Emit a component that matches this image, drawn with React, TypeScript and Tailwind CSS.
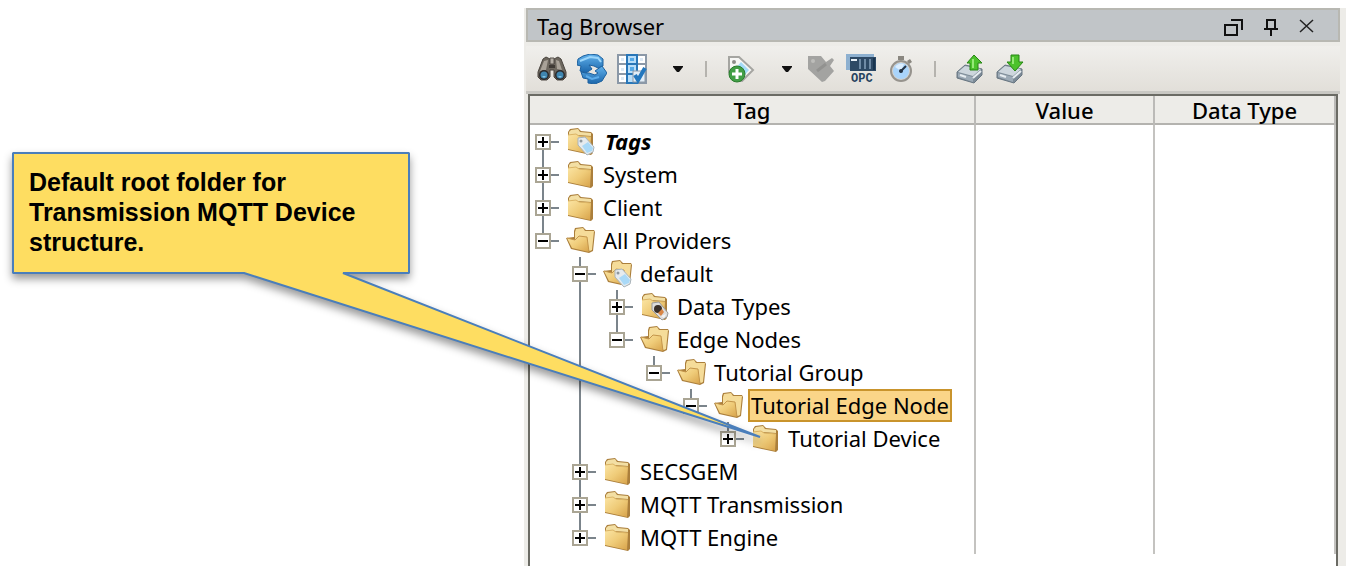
import { type ReactNode } from "react";
import clsx from "clsx";

type FolderKind = "closed" | "open";
type Badge = "tag" | "type";

type TreeNode = {
  label: string;
  level: number;
  open?: boolean;
  first?: boolean;
  last?: boolean;
  badge?: Badge;
  selected?: boolean;
  // levels above this node whose branch continues below it
  guides?: number[];
};

const nodes: TreeNode[] = [
  { label: "Tags", level: 0, first: true, badge: "tag" },
  { label: "System", level: 0 },
  { label: "Client", level: 0 },
  { label: "All Providers", level: 0, open: true, last: true },
  { label: "default", level: 1, open: true, badge: "tag" },
  { label: "Data Types", level: 2, badge: "type", guides: [1] },
  { label: "Edge Nodes", level: 2, open: true, last: true, guides: [1] },
  { label: "Tutorial Group", level: 3, open: true, last: true, guides: [1] },
  {
    label: "Tutorial Edge Node",
    level: 4,
    open: true,
    last: true,
    selected: true,
    guides: [1],
  },
  { label: "Tutorial Device", level: 5, last: true, guides: [1] },
  { label: "SECSGEM", level: 1 },
  { label: "MQTT Transmission", level: 1 },
  { label: "MQTT Engine", level: 1, last: true },
];

export default function App() {
  return (
    <div className="flex bg-white pt-2 pr-1 pb-2 font-['Noto_Sans','Open_Sans',sans-serif] text-[22px] text-black">
      <Callout />
      <TagBrowser />
    </div>
  );
}

const Callout = () => (
  <aside className="relative z-10 w-[524px] shrink-0 pt-[144px] pl-3">
    <svg
      className="pointer-events-none absolute top-0 left-0 overflow-visible"
      width="780"
      height="450"
      viewBox="0 0 780 450"
      aria-hidden="true"
    >
      <path
        d="M13 145H409V265H343L760 429L244 265H13Z"
        fill="#fedd61"
        stroke="#4a7ebb"
        strokeWidth="2"
        strokeLinejoin="bevel"
        className="drop-shadow-[0_5px_4px_rgba(0,0,0,0.4)]"
      />
    </svg>
    <p className="relative w-[398px] px-[17px] py-[15px] font-['Liberation_Sans',Arial,sans-serif] text-[25px] leading-[30px] font-bold">
      Default root folder for Transmission MQTT Device structure.
    </p>
  </aside>
);

const TagBrowser = () => (
  <main className="min-w-0 flex-1 bg-[#edece8] pr-[6px] pl-[2px]">
    <TitleBar />
    <Toolbar />
    <div className="mx-[2px] border-2 border-b-0 border-[#6b6b64] bg-white pb-3">
      <table className="w-full table-fixed border-collapse">
        <thead>
          <tr className="h-7 border-b-2 border-[#b4b3af] bg-[#edece8] leading-[26px]">
            <HeaderCell>Tag</HeaderCell>
            <HeaderCell className="w-[179px]">Value</HeaderCell>
            <HeaderCell className="w-[181px]">Data Type</HeaderCell>
          </tr>
        </thead>
        <tbody>
          {nodes.map((node) => (
            <tr key={node.label}>
              <td className="border-r-2 border-[#c4c3c0] p-0">
                <TreeRow node={node} />
              </td>
              <td className="border-r-2 border-[#c4c3c0] p-0" />
              <td className="border-r-2 border-[#c4c3c0] p-0" />
            </tr>
          ))}
        </tbody>
      </table>
    </div>
  </main>
);

const HeaderCell = ({
  children,
  className,
}: {
  children: ReactNode;
  className?: string;
}) => (
  <th
    scope="col"
    className={clsx("border-r-2 border-[#bbbab7] p-0 font-medium", className)}
  >
    {children}
  </th>
);

const TitleBar = () => (
  <header className="flex h-[34px] items-center border-2 border-[#b8b8b2] bg-[#c1c5c8] pt-[3px] pr-[22px] pl-[9px]">
    <h1 className="flex-1">Tag Browser</h1>
    <div className="flex items-center gap-4">
      <button type="button" aria-label="Float" className="p-[2px]">
        <svg width="20" height="18" fill="none" stroke="#111" strokeWidth="2">
          <path d="M7 2H18V12" />
          <rect x="1" y="7" width="12" height="10" />
        </svg>
      </button>
      <button type="button" aria-label="Pin" className="p-[2px]">
        <svg width="14" height="18" fill="none" stroke="#111" strokeWidth="2">
          <path d="M3 11V2H11V11M0 11H14M7 11V18" />
        </svg>
      </button>
      <button type="button" aria-label="Close" className="p-[2px]">
        <svg width="16" height="18" fill="none" stroke="#222" strokeWidth="1.5">
          <path d="M2 2L15 14M15 2L2 14" />
        </svg>
      </button>
    </div>
  </header>
);

const Toolbar = () => (
  <div className="mt-1 flex h-12 items-center border-b-3 border-[#c9c8c3] bg-linear-to-b from-[#f0efec] to-[#e2dfd9] pl-[6px]">
    <ToolButton label="Find">
      <BinocularsIcon />
    </ToolButton>
    <ToolButton label="Refresh">
      <RefreshIcon />
    </ToolButton>
    <ToolButton label="Select columns">
      <ColumnsIcon />
    </ToolButton>
    <Caret label="Column options" />
    <Separator />
    <ToolButton label="New tag">
      <AddTagIcon />
    </ToolButton>
    <Caret label="New tag options" />
    <ToolButton label="Edit tag">
      <EditTagIcon />
    </ToolButton>
    <ToolButton label="Browse OPC servers">
      <OpcIcon />
    </ToolButton>
    <ToolButton label="Scan classes">
      <StopwatchIcon />
    </ToolButton>
    <Separator />
    <ToolButton label="Export tags">
      <DriveIcon direction="up" />
    </ToolButton>
    <ToolButton label="Import tags">
      <DriveIcon direction="down" />
    </ToolButton>
  </div>
);

const ToolButton = ({
  label,
  children,
}: {
  label: string;
  children: ReactNode;
}) => (
  <button
    type="button"
    aria-label={label}
    className="flex h-10 w-10 shrink-0 items-center justify-center"
  >
    {children}
  </button>
);

const Caret = ({ label }: { label: string }) => (
  <button
    type="button"
    aria-label={label}
    className="flex h-10 w-10 shrink-0 items-center justify-center pl-3"
  >
    <svg width="10" height="6" viewBox="0 0 10 6">
      <path d="M0 0H10V1L6 6H4L0 1Z" fill="#111" />
    </svg>
  </button>
);

const Separator = () => (
  <div className="mr-[14px] ml-[13px] h-4 w-[2px] shrink-0 bg-[#b5b3ae]" />
);

const TreeRow = ({ node }: { node: TreeNode }) => (
  <div className="flex h-[33px] items-center pl-[5px] whitespace-nowrap">
    {Array.from({ length: node.level }, (_, level) => (
      <div key={level} className="h-full w-[37px] shrink-0 pl-[7px]">
        {node.guides?.includes(level) && (
          <div className="h-full w-[2px] bg-[#7b848b]" />
        )}
      </div>
    ))}
    <div className="flex h-full w-4 shrink-0 flex-col items-center">
      <div
        className={clsx("w-[2px] flex-1", !node.first && "bg-[#7b848b]")}
      />
      <button
        type="button"
        aria-label={`${node.open ? "Collapse" : "Expand"} ${node.label}`}
        className="h-4 w-4 border-2 border-[#aaa594] bg-white"
      >
        <svg width="12" height="12" stroke="#000" strokeWidth="2">
          <path d={node.open ? "M1 6H11" : "M1 6H11M6 1V11"} />
        </svg>
      </button>
      <div className={clsx("w-[2px] flex-1", !node.last && "bg-[#7b848b]")} />
    </div>
    <div className="h-[2px] w-2 shrink-0 bg-[#7b848b]" />
    <FolderIcon kind={node.open ? "open" : "closed"} badge={node.badge} />
    <span
      className={clsx(
        "ml-1 border-2 px-px leading-[29px]",
        node.selected
          ? "border-[#c9942c] bg-[#fad588]"
          : "border-transparent",
        node.first && "pl-[3px] font-bold italic",
      )}
    >
      {node.label}
    </span>
  </div>
);

const FolderIcon = ({ kind, badge }: { kind: FolderKind; badge?: Badge }) => (
  <svg
    className="ml-[7px] shrink-0"
    width="30"
    height="28"
    viewBox="0 0 30 28"
    aria-hidden="true"
  >
    <defs>
      <linearGradient id="folder" x1="0" y1="0" x2="1" y2="1">
        <stop offset="0" stopColor="#fbe5a4" />
        <stop offset="0.500" stopColor="#efcb78" />
        <stop offset="1" stopColor="#d7a24a" />
      </linearGradient>
    </defs>
    {kind === "closed" ? (
      <>
        <path
          d="M2 4L4 1L12 0L15 3L25 4L27 6V25L25 27L2 22Z"
          fill="#ab7f3c"
        />
        <path d="M3 4L5 2L12 1L14 4L25 5V8L12 7L3 7Z" fill="#f3dfa4" />
        <path d="M2 7L10 6L13 8L25 9L24 26L2 21Z" fill="url(#folder)" />
        <path d="M2 7L10 6L13 8L25 9" fill="none" stroke="#dbb465" />
      </>
    ) : (
      <>
        <path
          d="M8 4L9 1L17 0L20 3L28 3L29 5L27 24L23 26L5 22L0 11L8 10Z"
          fill="#ab7f3c"
        />
        <path d="M9 5L10 2L17 1L19 4L28 4L26 23L24 24L9 18Z" fill="#f5dc99" />
        <path d="M1 11L9 13L13 9L21 10L23 25L6 21Z" fill="url(#folder)" />
        <path
          d="M1 11L9 13L13 9L21 10L23 25"
          fill="none"
          stroke="#c4954a"
        />
      </>
    )}
    {badge === "tag" && (
      <>
        <path
          d="M12 10L19 9L28 19L27 24L21 27L12 17Z"
          fill="#e6ebee"
          stroke="#a9b4bb"
        />
        <path d="M16 18L22 14L27 20L26 23L21 25Z" fill="#a9d9f7" />
        <circle cx="15" cy="13" r="1.500" fill="#8e989e" />
      </>
    )}
    {badge === "type" && (
      <>
        <path
          d="M12 10L19 9L28 20L27 24L22 27L12 17Z"
          fill="#dddddd"
          stroke="#999999"
        />
        <circle cx="18" cy="16" r="4" fill="#3a3029" />
        <path d="M18 20L22 16L24 19L21 23Z" fill="#d98545" />
        <path d="M21 23L26 21L24 25Z" fill="#f5f5f5" />
      </>
    )}
  </svg>
);

const BinocularsIcon = () => (
  <svg width="30" height="26" viewBox="0 0 30 26">
    <path
      d="M6 3L9 1L13 3V8H17V3L21 1L24 3L29 16V21L26 24H20L17 21V14H13V21L10 24H4L1 21V16Z"
      fill="#6d675e"
      stroke="#4a453f"
    />
    <path d="M7 5L11 4L9 14L3 15ZM19 4L22 5L25 14L20 13Z" fill="#a9a298" />
    <path d="M13 2H17V8H13Z" fill="#b5afa6" stroke="#57514a" />
    <path d="M12 9H18V12H12Z" fill="#3f3a35" />
    <circle cx="7" cy="19" r="5" fill="#2a2b2d" />
    <circle cx="23" cy="19" r="5" fill="#2a2b2d" />
    <circle cx="7" cy="19" r="3.500" fill="#3f86b0" />
    <circle cx="23" cy="19" r="3.500" fill="#3f86b0" />
    <path d="M5 20H9L7 22ZM21 20H25L23 22Z" fill="#83c2df" />
  </svg>
);

const RefreshIcon = () => (
  <svg width="30" height="30" viewBox="0 0 30 30">
    <defs>
      <linearGradient id="refresh" x1="0" y1="0" x2="0" y2="1">
        <stop offset="0" stopColor="#62b2ec" />
        <stop offset="1" stopColor="#1a65aa" />
      </linearGradient>
    </defs>
    <path
      d="M1 5L6 2L13 0L21 1L26 5L26 12L21 14L17 12L12 11L15 15L9 19L3 17L4 12L0 11Z"
      fill="url(#refresh)"
      stroke="#1d619f"
    />
    <path
      d="M30 19L25 12L18 17L21 19L18 21L12 19L9 19L4 18L6 24L11 25L11 29L18 30L25 27L28 22Z"
      fill="url(#refresh)"
      stroke="#1d619f"
    />
    <path d="M3 7L13 3L21 4L24 8" fill="none" stroke="#9bd6fb" strokeWidth="2" />
    <path d="M9 22L15 25L22 23" fill="none" stroke="#5cacea" strokeWidth="2" />
  </svg>
);

const ColumnsIcon = () => (
  <svg width="30" height="30" viewBox="0 0 30 30">
    <rect x="1" y="1" width="28" height="28" fill="#fff" />
    <path
      d="M1 1H29V29H1ZM1 10H29M1 20H29"
      fill="none"
      stroke="#8b98a7"
      strokeWidth="2"
    />
    <rect x="10" y="1" width="10" height="28" fill="#b8ddf8" />
    <path
      d="M10 1H20V29H10ZM10 10H20M10 20H20"
      fill="none"
      stroke="#2876b8"
      strokeWidth="2"
    />
    <path
      d="M4 4H7V7H4ZM4 14H7V17H4ZM4 23H7V26H4ZM23 4H26V7H23Z"
      fill="#dce9f5"
    />
    <path d="M13 4H17V7H13ZM13 13H17V17H13Z" fill="#54a9e8" />
    <rect x="16" y="17" width="12" height="11" fill="#e2edf6" stroke="#8c99a8" />
    <path
      d="M18 21L21 26L28 14"
      fill="none"
      stroke="#2377be"
      strokeWidth="4"
    />
  </svg>
);

const AddTagIcon = () => (
  <svg width="28" height="28" viewBox="0 0 28 28">
    <path
      d="M2 2H12L26 15L15 26H11L2 17Z"
      fill="#f7f7f5"
      stroke="#a5a5a1"
      strokeWidth="2"
    />
    <path d="M14 7L22 15L16 22L8 14Z" fill="#a4dbf8" />
    <circle cx="7" cy="7" r="2" fill="#8d8d88" />
    <circle cx="10" cy="19" r="8" fill="#429f46" stroke="#2b7d2e" />
    <path d="M10 14V24M5 19H15" stroke="#fff" strokeWidth="3" />
  </svg>
);

const EditTagIcon = () => (
  <svg width="26" height="28" viewBox="0 0 26 28">
    <path
      d="M0 1H13L18 7L24 3L26 5L22 11L26 16L17 26L14 27L0 14Z"
      fill="#a3a3a1"
    />
    <path d="M9 16L18 9" stroke="#929290" strokeWidth="3" />
    <circle cx="5" cy="6" r="2" fill="#bdbdba" />
  </svg>
);

const OpcIcon = () => (
  <svg width="30" height="34" viewBox="0 0 30 34">
    <path d="M0 2H28V6H5V18H0Z" fill="#8db0d0" />
    <rect x="4" y="5" width="26" height="14" fill="#2d4965" />
    <path d="M5 8H11" stroke="#e8f0f7" strokeWidth="2" />
    <path d="M14 7V17M19 7V17M24 7V17" stroke="#6f8ba6" strokeWidth="2" />
    <path d="M28 6V18" stroke="#193550" strokeWidth="2" />
    <text
      x="5"
      y="30"
      fontFamily="Liberation Mono, monospace"
      fontSize="12"
      fontWeight="bold"
      fill="#26435f"
    >
      OPC
    </text>
  </svg>
);

const StopwatchIcon = () => (
  <svg width="24" height="28" viewBox="0 0 24 28">
    <path d="M9 1H15V5H9ZM18 6L21 4L23 7L20 9Z" fill="#8a8780" />
    <circle
      cx="12"
      cy="16"
      r="10"
      fill="#d4d2ce"
      stroke="#96938d"
      strokeWidth="2"
    />
    <circle cx="12" cy="16" r="8" fill="#a9d4fb" />
    <path d="M6 12A8 8 0 0 1 15 9L12 16Z" fill="#dceefe" />
    <path d="M11 17L17 11" stroke="#243344" strokeWidth="2" />
    <circle cx="12" cy="16" r="2" fill="#243344" />
  </svg>
);

const DriveIcon = ({ direction }: { direction: "up" | "down" }) => (
  <svg width="28" height="30" viewBox="0 0 28 30">
    <path
      d="M1 18L9 11L26 15V21L18 29L1 24Z"
      fill="#7d8b97"
      stroke="#687682"
    />
    <path d="M2 18L9 12L25 15L17 22Z" fill="#cdd6dd" />
    <path d="M2 19L17 23V28L2 23Z" fill="#9dabb7" />
    <path d="M4 21L10 23M17 24L25 17" stroke="#e6ecf0" strokeWidth="2" />
    <path
      d={
        direction === "up"
          ? "M18 1L26 9H22V16H14V9H11Z"
          : "M15 1H23V8H27L19 17L11 8H15Z"
      }
      fill="#4cc22c"
      stroke="#278614"
    />
    <path
      d={direction === "up" ? "M17 5V14" : "M17 3V10"}
      stroke="#95e977"
      strokeWidth="2"
    />
  </svg>
);
